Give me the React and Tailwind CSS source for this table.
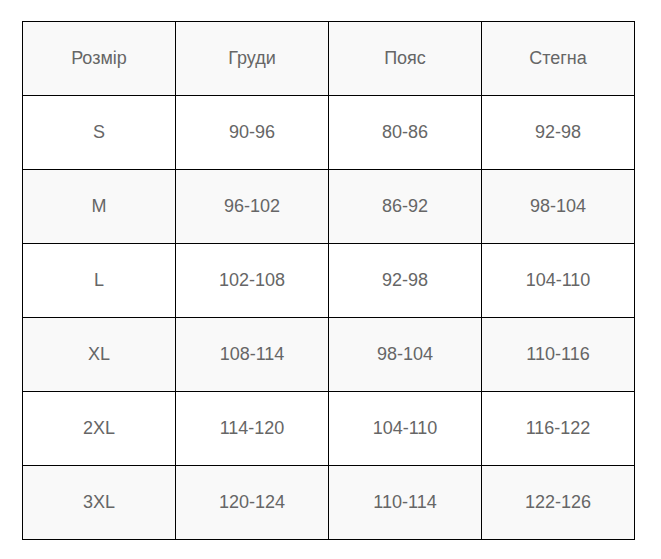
import React from 'react';

const header = ['Розмір', 'Груди', 'Пояс', 'Стегна'];

const rows = [
  ['S', '90-96', '80-86', '92-98'],
  ['M', '96-102', '86-92', '98-104'],
  ['L', '102-108', '92-98', '104-110'],
  ['XL', '108-114', '98-104', '110-116'],
  ['2XL', '114-120', '104-110', '116-122'],
  ['3XL', '120-124', '110-114', '122-126'],
];

const App = () => {
  return (
    <div className="w-[661px] h-[559px] bg-white pt-[21px] pl-[22px] font-['Liberation_Sans',Arial,sans-serif]">
      <table className="w-[613px] border-collapse table-fixed text-[18px] text-[#666666]">
        <thead>
          <tr className="bg-[#f9f9f9] h-[74px]">
            {header.map((h) => (
              <th key={h} className="border border-black font-normal text-center">
                {h}
              </th>
            ))}
          </tr>
        </thead>
        <tbody>
          {rows.map((row, i) => (
            <tr key={row[0]} className={i % 2 === 1 ? 'bg-[#f9f9f9] h-[74px]' : 'bg-white h-[74px]'}>
              {row.map((cell, j) => (
                <td key={j} className="border border-black text-center">
                  {cell}
                </td>
              ))}
            </tr>
          ))}
        </tbody>
      </table>
    </div>
  );
};

export default App;
